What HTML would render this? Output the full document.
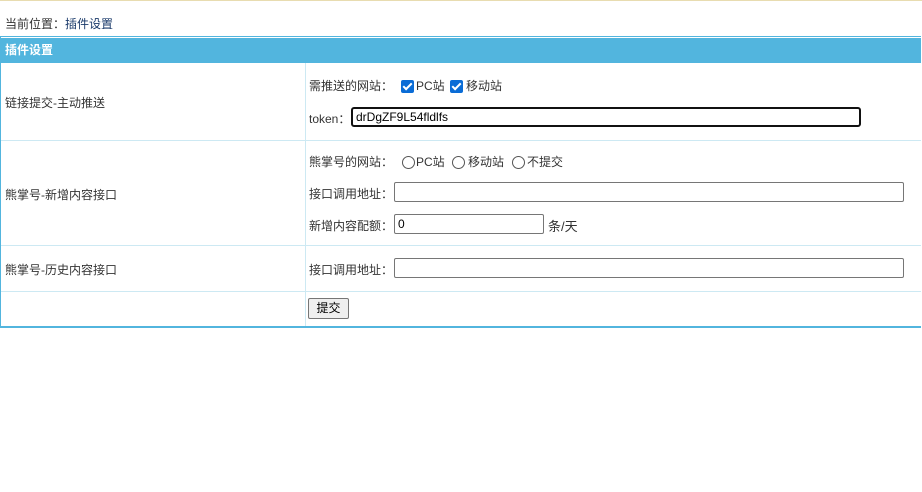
<!DOCTYPE html>
<html><head><meta charset="utf-8"><style>
body{margin:0;background:#fff;font-family:"Liberation Sans","Noto Sans CJK SC",sans-serif;font-size:12px;color:#333;}
.top{height:1px;background:#e8dcb0;}
.bc{position:absolute;left:5px;top:15px;}
.bc span{color:#1a3a6a}
.tbl{position:absolute;left:0;top:36px;width:921px;height:292px;border:1px solid #52b5de;border-bottom:2px solid #52b5de;border-right:none;box-sizing:border-box;}
.hd{position:absolute;left:0;top:1px;right:0;height:25px;background:#52b5de;color:#fff;font-weight:bold;line-height:25px;padding-left:4px;}
.hl{position:absolute;left:0;right:0;height:1px;background:#cde9f3;}
.vl{position:absolute;left:304px;top:26px;bottom:0;width:1px;background:#cde9f3;}
.t{position:absolute;white-space:nowrap;}
.in{position:absolute;border:1px solid #767676;border-radius:2px;box-sizing:border-box;height:20px;font-size:12px;line-height:18px;padding-left:3px;color:#000;}
.cb{position:absolute;width:13px;height:13px;background:#0a6cd6;border-radius:2px;}
.cb:after{content:"";position:absolute;left:4px;top:1px;width:3px;height:7px;border:solid #fff;border-width:0 2px 2px 0;transform:rotate(45deg);}
.rd{position:absolute;width:13px;height:13px;border:1px solid #555;border-radius:50%;box-sizing:border-box;}
.btn{position:absolute;left:308px;top:298px;width:41px;height:21px;border:1px solid #767676;border-radius:2px;background:#efefef;box-sizing:border-box;text-align:center;line-height:19px;color:#000;}
</style></head><body>
<div class="top"></div>
<div class="bc">当前位置：<span>插件设置</span></div>
<div class="tbl">
<div class="hd">插件设置</div>
<div class="vl"></div>
<div class="hl" style="top:103px"></div>
<div class="hl" style="top:208px"></div>
<div class="hl" style="top:254px"></div>
</div>
<div class="t" style="left:5px;top:94px">链接提交-主动推送</div>
<div class="t" style="left:309px;top:77px">需推送的网站：</div>
<div class="cb" style="left:401px;top:80px"></div>
<div class="t" style="left:416px;top:77px">PC站</div>
<div class="cb" style="left:450px;top:80px"></div>
<div class="t" style="left:466px;top:77px">移动站</div>
<div class="t" style="left:309px;top:110px">token：</div>
<div class="in" style="left:351px;top:107px;width:510px;border:2px solid #111;border-radius:3px;line-height:16px">drDgZF9L54fldlfs</div>
<div class="t" style="left:5px;top:186px">熊掌号-新增内容接口</div>
<div class="t" style="left:309px;top:153px">熊掌号的网站：</div>
<div class="rd" style="left:402px;top:156px"></div>
<div class="t" style="left:416px;top:153px">PC站</div>
<div class="rd" style="left:452px;top:156px"></div>
<div class="t" style="left:468px;top:153px">移动站</div>
<div class="rd" style="left:512px;top:156px"></div>
<div class="t" style="left:527px;top:153px">不提交</div>
<div class="t" style="left:309px;top:185px">接口调用地址：</div>
<div class="in" style="left:394px;top:182px;width:510px"></div>
<div class="t" style="left:309px;top:217px">新增内容配额：</div>
<div class="in" style="left:394px;top:214px;width:150px">0</div>
<div class="t" style="left:548px;top:216px;font-size:13px">条/天</div>
<div class="t" style="left:5px;top:261px">熊掌号-历史内容接口</div>
<div class="t" style="left:309px;top:261px">接口调用地址：</div>
<div class="in" style="left:394px;top:258px;width:510px"></div>
<div class="btn">提交</div>
</body></html>
